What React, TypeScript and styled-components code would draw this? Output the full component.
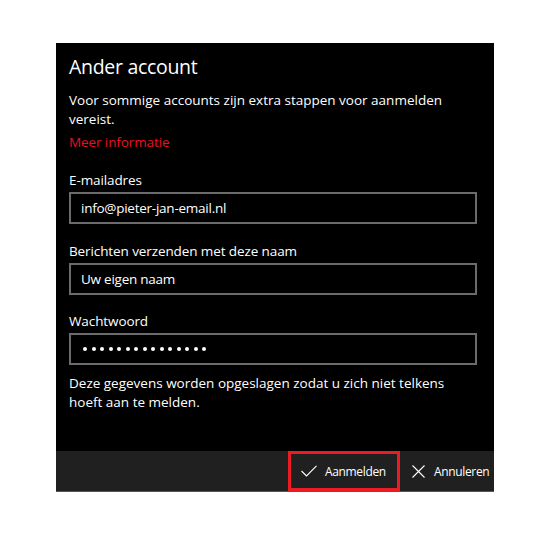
import React from "react";
import styled, { createGlobalStyle } from "styled-components";

const Global = createGlobalStyle`
  html, body { margin: 0; padding: 0; background: #ffffff; }
  body { font-family: "Open Sans", "Noto Sans", sans-serif; }
  * { box-sizing: border-box; }
`;

const Page = styled.div`
  width: 550px;
  height: 535px;
  padding: 43px 0 0 56px;
`;

const Dialog = styled.div`
  width: 438px;
  height: 449px;
  background: #000000;
  display: flex;
  flex-direction: column;
  color: #ffffff;
`;

const Body = styled.div`
  flex: 1;
  padding: 10px 17px 0 13px;
  display: flex;
  flex-direction: column;
`;

const Title = styled.h1`
  margin: 0;
  font-size: 19.5px;
  font-weight: 400;
  line-height: 28px;
  letter-spacing: -0.3px;
`;

const Text = styled.p<{ $mt: number }>`
  margin: ${(p) => p.$mt}px 0 0 0;
  font-size: 13.5px;
  line-height: 19px;
  letter-spacing: 0;
`;

const Link = styled.a`
  display: block;
  margin-top: 4px;
  font-size: 13.5px;
  line-height: 19px;
  color: #e81123;
  letter-spacing: -0.1px;
  text-decoration: none;
`;

const Field = styled.div<{ $mt: number }>`
  margin-top: ${(p) => p.$mt}px;
  display: flex;
  flex-direction: column;
  gap: 2px;
`;

const Label = styled.label`
  font-size: 13.5px;
  line-height: 19px;
  letter-spacing: -0.1px;
`;

const Input = styled.div`
  height: 32px;
  border: 2px solid #6b6b6b;
  display: flex;
  align-items: center;
  padding: 0 10px;
  font-size: 13.5px;
  letter-spacing: -0.25px;
`;

const Dots = styled.div`
  display: flex;
  gap: 4.5px;
  padding-left: 2px;
`;

const Dot = styled.span`
  width: 4px;
  height: 4px;
  border-radius: 50%;
  background: #ffffff;
`;

const Footer = styled.div`
  height: 41px;
  background: #202020;
  border-bottom: 1px solid #4b5968;
  display: flex;
  justify-content: flex-end;
`;

const Button = styled.button<{ $highlight?: boolean; $w: number; $pl: number }>`
  width: ${(p) => p.$w}px;
  height: 40px;
  background: transparent;
  border: ${(p) => (p.$highlight ? "3px solid #ed1c24" : "none")};
  color: #ffffff;
  display: flex;
  align-items: center;
  gap: ${(p) => (p.$highlight ? 8 : 9)}px;
  padding: 0 0 0 ${(p) => p.$pl}px;
  font-family: "Open Sans", "Noto Sans", sans-serif;
  font-size: 12px;
  letter-spacing: -0.35px;
  white-space: nowrap;
  cursor: pointer;
`;

const Icon = styled.svg`
  flex: none;
  display: block;
`;

export default function App() {
  return (
    <>
      <Global />
      <Page>
        <Dialog>
          <Body>
            <Title>Ander account</Title>
            <Text $mt={10}>
              Voor sommige accounts zijn extra stappen voor aanmelden vereist.
            </Text>
            <Link href="#">Meer informatie</Link>
            <Field $mt={19}>
              <Label>E-mailadres</Label>
              <Input>info@pieter-jan-email.nl</Input>
            </Field>
            <Field $mt={18}>
              <Label>Berichten verzenden met deze naam</Label>
              <Input>Uw eigen naam</Input>
            </Field>
            <Field $mt={17}>
              <Label>Wachtwoord</Label>
              <Input>
                <Dots>
                  {Array.from({ length: 15 }).map((_, i) => (
                    <Dot key={i} />
                  ))}
                </Dots>
              </Input>
            </Field>
            <Text $mt={9}>
              Deze gegevens worden opgeslagen zodat u zich niet telkens hoeft aan te melden.
            </Text>
          </Body>
          <Footer>
            <Button $highlight $w={112} $pl={10}>
              <Icon width="16" height="12" viewBox="0 0 16 12">
                <path d="M0.5 6 L5.5 11 L15.5 0.8" fill="none" stroke="#ffffff" strokeWidth="1.1" />
              </Icon>
              Aanmelden
            </Button>
            <Button $w={94} $pl={12}>
              <Icon width="13" height="13" viewBox="0 0 13 13">
                <path d="M0.5 0.5 L12.5 12.5 M12.5 0.5 L0.5 12.5" fill="none" stroke="#ffffff" strokeWidth="1.1" />
              </Icon>
              Annuleren
            </Button>
          </Footer>
        </Dialog>
      </Page>
    </>
  );
}
